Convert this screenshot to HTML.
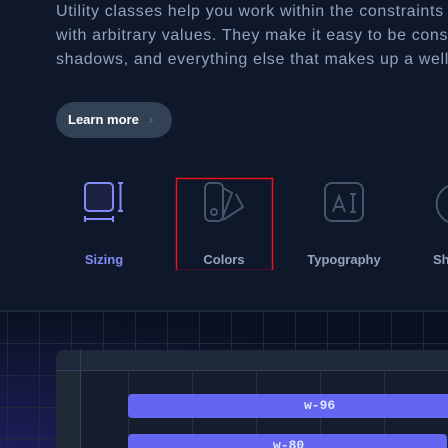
<!DOCTYPE html><html><head><style>
html,body{margin:0;width:448px;height:448px;overflow:hidden}
body{background:#0f172a;font-family:"Liberation Sans",sans-serif;position:relative}
.p{position:absolute;left:56px;top:0;width:392px;overflow:hidden;white-space:nowrap;color:#94a3b8;font-size:16px;letter-spacing:0.65px;line-height:24px}
.btn{position:absolute;left:56px;top:102px;width:116px;height:36px;border-radius:18px;background:#334155;color:#fff;font-weight:bold;font-size:13px;line-height:36px;box-sizing:border-box;padding-left:12px}
.btn span{color:#64748b;margin-left:10px;font-weight:normal}
.lbl{position:absolute;top:252px;font-size:13px;font-weight:bold;color:#94a3b8;transform:translateX(-50%)}
svg{position:absolute}
</style></head><body>
<div class="p">Utility classes help you work within the constraints of a<br>with arbitrary values. They make it easy to be consis<br>shadows, and everything else that makes up a well-e</div>
<div class="btn">Learn more<span>›</span></div>
<svg width="448" height="110" style="left:0;top:160px">
<rect x="85" y="23" width="28" height="28" rx="4" fill="#1e2242" stroke="#818cf8" stroke-width="2"/>
<path d="M118 23h5M120.5 23v28M118 51h5M85 56v6M85 59h28M113 56v6" stroke="#818cf8" stroke-width="2" fill="none"/>
<rect x="176.5" y="18.5" width="96" height="92" fill="none" stroke="#e11" stroke-width="1.5"/>
<g stroke="#475569" stroke-width="2" fill="none">
<rect x="205" y="23" width="18" height="38" rx="5"/><circle cx="214" cy="52" r="3"/>
<path d="M223 28l9 5l-9 23M223 60l20-13l-7-13"/>
<rect x="325" y="23" width="38" height="38" rx="7"/>
<path d="M333 52l6-16l6 16M335 47h8M350 34h6M353 34v18M350 52h6"/>
<path d="M448 26a20 20 0 0 0 0 36"/>
</g></svg>
<div class="lbl" style="left:104px;color:#818cf8">Sizing</div>
<div class="lbl" style="left:224px">Colors</div>
<div class="lbl" style="left:344px">Typography</div>
<div class="lbl" style="left:433px;transform:none">Sh</div>
<div style="position:absolute;left:0;top:310px;width:448px;height:138px;box-sizing:border-box;border-top:1px solid #1e293b;
background-image:linear-gradient(#1e293b 1px,transparent 1px),linear-gradient(90deg,#1e293b 1px,transparent 1px),radial-gradient(ellipse at 0 100%,#1c1d5a,#0b1120 70%);background-size:32px 32px,32px 32px,100% 100%;background-position:0 0,7px 0,0 0"></div>
<div style="position:absolute;left:56px;top:350px;width:392px;height:98px;border-radius:8px 0 0 0;background:#1e293b;overflow:hidden">
<div style="position:absolute;left:0;top:20px;width:24px;height:78px;background:#1e2a36;border-right:1px solid #334155"></div>
<div style="position:absolute;left:24px;top:0;width:1px;height:20px;background:#334155"></div>
<div style="position:absolute;left:0;top:20px;width:392px;height:1px;background:#334155"></div>
<div style="position:absolute;left:25px;top:21px;width:367px;height:77px;background:#151d2e;background-image:linear-gradient(90deg,#263142 1px,transparent 1px);background-size:64px 100%;background-position:47px 0"></div>
<div style="position:absolute;left:72px;top:44px;width:320px;height:24px;border-radius:4px 0 0 4px;background:#6366f1;color:#e0e7ff;font:bold 13px 'Liberation Mono',monospace;line-height:24px;text-indent:176px">w-96</div>
<div style="position:absolute;left:72px;top:84px;width:319px;height:14px;border-radius:4px 4px 0 0;background:#6366f1;color:#e0e7ff;font:bold 13px 'Liberation Mono',monospace;line-height:24px;text-indent:145px;overflow:hidden">w-80</div>
</div>
</body></html>
